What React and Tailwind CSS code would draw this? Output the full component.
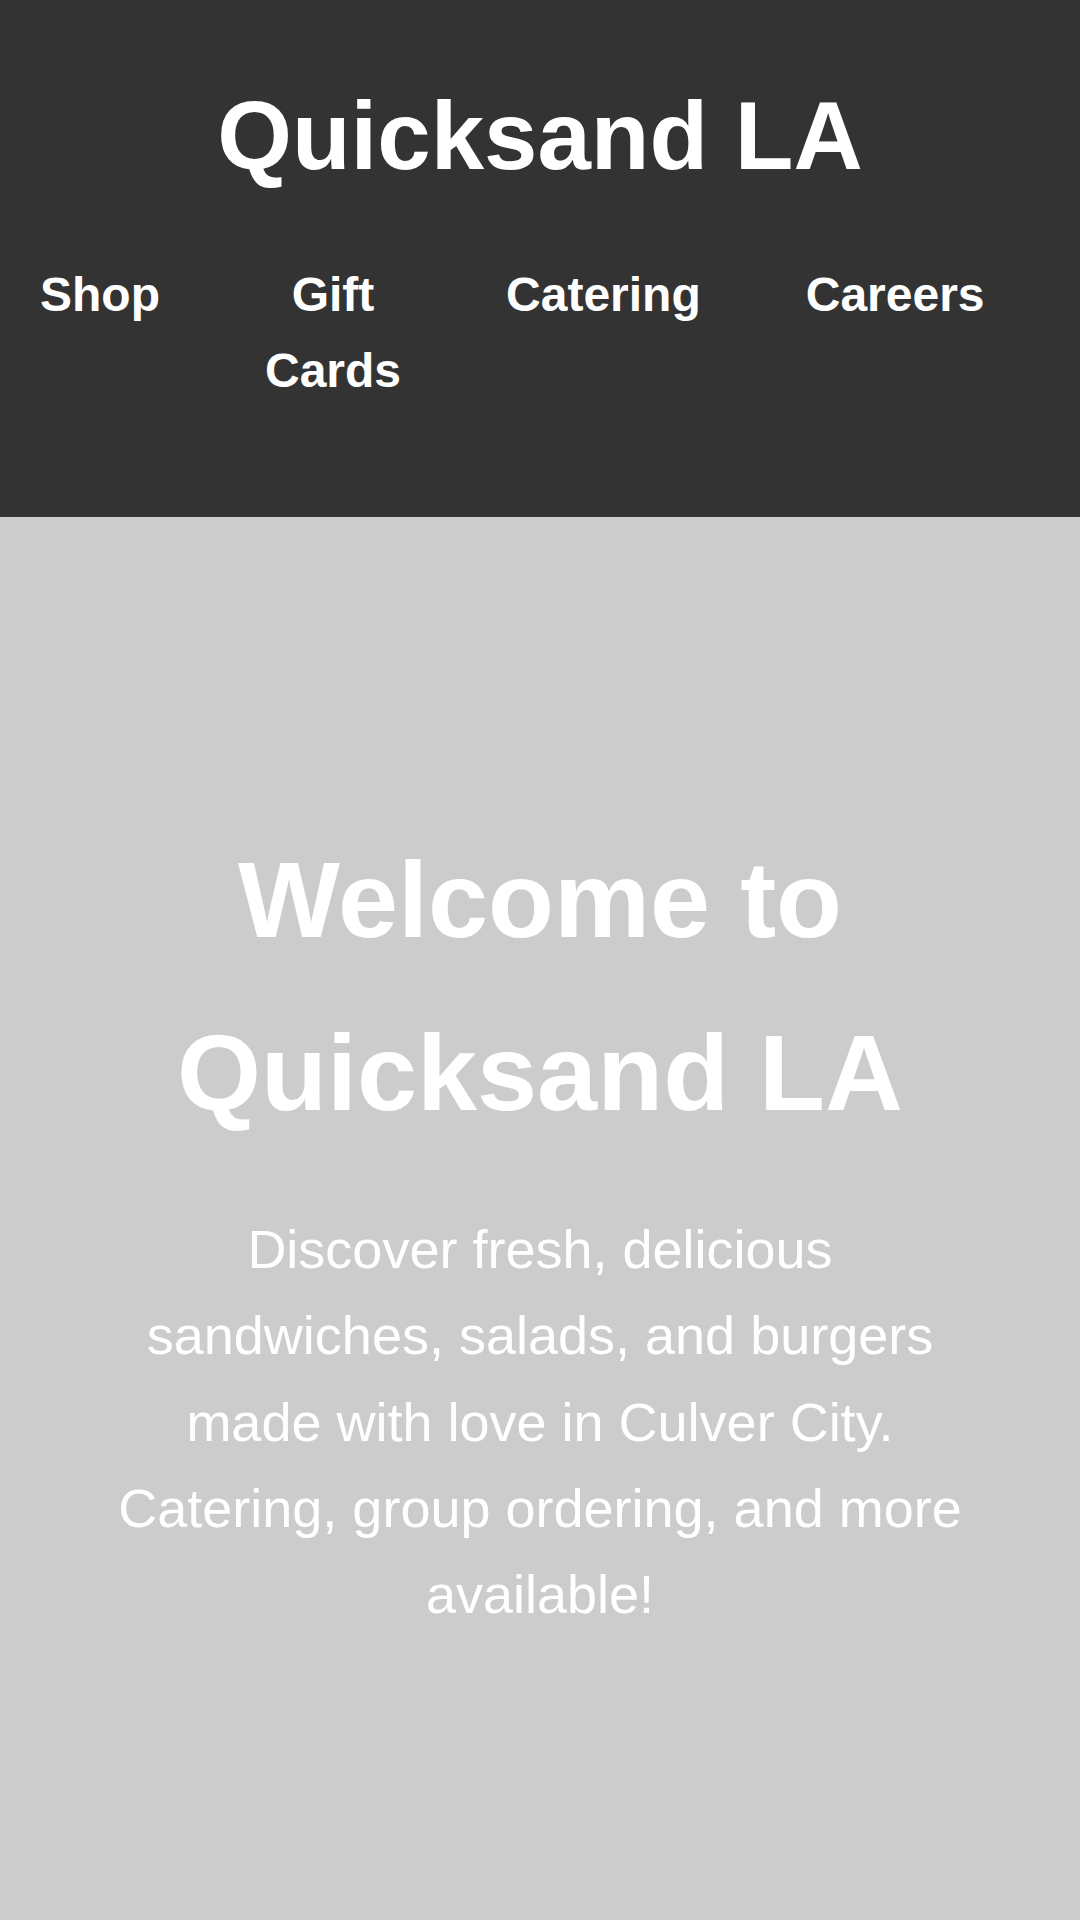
const NAV = ["Shop", "Gift Cards", "Catering", "Careers"];

export default function App() {
  return (
    <div
      className="min-h-screen bg-[#cccccc] text-white leading-[1.6]"
      style={{ fontFamily: '"Liberation Sans", Arial, sans-serif' }}
    >
      <header className="bg-[#333333] pt-[59px] pb-[107px] text-center">
        <h1 className="text-[96px] font-bold leading-[1.6]">Quicksand LA</h1>
        <nav className="mt-[44px]">
          <ul className="flex gap-[105px] pl-[40px]">
            {NAV.map((item) => (
              <li key={item} className="w-min text-center text-[48px] font-bold leading-[1.6]">
                {item}
              </li>
            ))}
          </ul>
        </nav>
      </header>

      {/* hero */}
      <section className="pt-[297px] pb-[282px] text-center">
        <h2 className="mx-auto text-[108px] font-bold leading-[1.6]">
          Welcome to
          <br />
          Quicksand LA
        </h2>
        <p className="mx-auto mt-[46px] w-[864px] text-[54px] leading-[1.6]">
          Discover fresh, delicious sandwiches, salads, and burgers made with love in Culver City.
          Catering, group ordering, and more available!
        </p>
      </section>
    </div>
  );
}
